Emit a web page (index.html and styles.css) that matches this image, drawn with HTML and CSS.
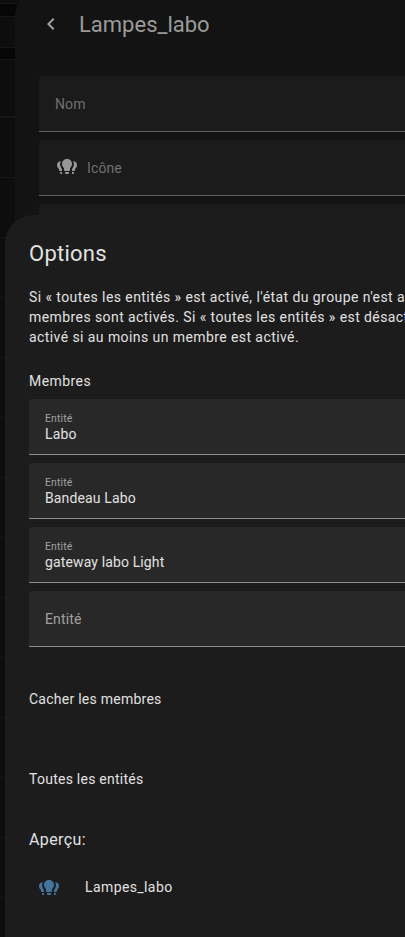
FILE: index.html
```html
<!DOCTYPE html>
<html lang="fr">
<head>
<meta charset="utf-8">
<title>Lampes_labo</title>
<link rel="stylesheet" href="styles.css">
</head>
<body>
<svg class="defs" aria-hidden="true">
  <symbol id="bulbs" viewBox="0 0 24 24">
    <path d="M12 4C9.2 4 7 6.1 7 8.8C7 10.6 7.8 12 9 13V15A1 1 0 0 0 10 16H14A1 1 0 0 0 15 15V13C16.2 12 17 10.6 17 8.8C17 6.1 14.8 4 12 4M10 17V18A1 1 0 0 0 11 19H13A1 1 0 0 0 14 18V17ZM6 6C3.5 6.2 2 8 2 10C2 11.8 2.8 13 4 14V15A1 1 0 0 0 5 16H7V14C5.9 12.8 5.1 11 5.1 9C5.1 8 5.4 7 6 6ZM18 6C20.5 6.2 22 8 22 10C22 11.8 21.2 13 20 14V15A1 1 0 0 1 19 16H17V14C18.1 12.8 18.9 11 18.9 9C18.9 8 18.6 7 18 6ZM5 17H7V19H6A1 1 0 0 1 5 18ZM17 17H19V18A1 1 0 0 1 18 19H17Z"/>
  </symbol>
</svg>
<div class="screen">
  <div class="table">
    <div class="row first"></div>
    <div class="row toolbar"></div>
    <div class="row search"></div>
    <div class="row toolbar short"></div>
    <div class="row heading"></div>
    <div class="row"></div><div class="row"></div><div class="row"></div><div class="row"></div>
    <div class="row"></div><div class="row"></div><div class="row"></div><div class="row"></div>
    <div class="row"></div><div class="row"></div><div class="row"></div><div class="row"></div>
    <div class="row"></div><div class="row"></div>
  </div>
  <section class="dialog">
    <header class="bar">
      <svg class="back" viewBox="0 0 24 24"><path d="M15.41 16.58L10.83 12L15.41 7.41L14 6L8 12L14 18Z"/></svg>
      <h1>Lampes_labo</h1>
    </header>
    <div class="field dim">Nom</div>
    <div class="field dim with-icon"><svg class="icon"><use href="#bulbs"/></svg>Icône</div>
    <div class="field dim"></div>
  </section>
  <section class="sheet">
    <h2>Options</h2>
    <p class="help">Si « toutes les entités » est activé, l'état du groupe n'est a<br>membres sont activés. Si « toutes les entités » est désact<br>activé si au moins un membre est activé.</p>
    <p class="label">Membres</p>
    <div class="field"><small>Entité</small><span>Labo</span></div>
    <div class="field"><small>Entité</small><span>Bandeau Labo</span></div>
    <div class="field"><small>Entité</small><span>gateway labo Light</span></div>
    <div class="field empty">Entité</div>
    <div class="toggle">Cacher les membres</div>
    <div class="toggle">Toutes les entités</div>
    <h3>Aperçu:</h3>
    <div class="preview"><svg class="icon"><use href="#bulbs"/></svg><span>Lampes_labo</span></div>
  </section>
</div>
</body>
</html>
```
FILE: styles.css
```css
* { box-sizing: border-box; }
body { margin: 0; background: #0d0d0d; font-family: Roboto, sans-serif; font-size: 14px; color: #e1e1e1; }
h1, h2, h3, p { margin: 0; font-weight: 400; }
.defs { position: absolute; width: 0; height: 0; }
.screen { position: relative; width: 405px; height: 937px; overflow: hidden; }
.row { height: 60px; border-bottom: 1px solid #171717; }
.row.first { height: 4px; }
.row.toolbar { height: 13px; background: #060606; }
.row.search { height: 31px; }
.row.toolbar.short { height: 12px; }
.row.heading { height: 58px; border-bottom: 2px solid #171717; }

.dialog { position: absolute; left: 15px; top: -12px; width: 560px; height: 960px; padding: 12px 24px; border-radius: 28px; background: #131313; }
.bar { display: flex; align-items: center; height: 48px; margin-bottom: 28px; }
.back { width: 24px; height: 24px; fill: #a0a0a0; }
.bar h1 { margin-left: 16px; padding-top: 2px; font-size: 22px; line-height: 28px; color: #9b9b9b; }

.field { display: flex; flex-direction: column; justify-content: center; height: 56px; margin-bottom: 8px; padding: 0 16px; border-radius: 4px 4px 0 0; border-bottom: 1px solid #8b8b8b; background: #282828; letter-spacing: 0.13px; }
.field small { padding-top: 1px; font-size: 10.5px; line-height: 14px; color: #a2a2a2; letter-spacing: 0.1px; }
.field span { line-height: 17px; }
.field.dim { background: #1b1b1b; border-color: #616161; color: #707070; }
.field.with-icon { flex-direction: row; justify-content: flex-start; align-items: center; gap: 8px; }
.field.empty { color: #a0a0a0; }
.icon { width: 24px; height: 24px; fill: currentColor; }
.with-icon .icon { color: #979797; margin-top: -1px; }

.sheet { position: absolute; left: 5px; top: 215px; width: 580px; height: 750px; padding: 24px; border-radius: 28px; background: #1c1c1c; }
.sheet h2 { padding-top: 1px; font-size: 22px; line-height: 28px; letter-spacing: 0.25px; }
.help { margin-top: 19px; line-height: 20px; letter-spacing: 0.42px; white-space: nowrap; }
.label { margin: 24px 0 8px; line-height: 20px; letter-spacing: 0.43px; }
.toggle { display: flex; align-items: center; height: 80px; letter-spacing: 0.25px; }
.field.empty + .toggle { margin-top: 12px; }
.sheet h3 { margin-top: 10px; font-size: 16px; line-height: 22px; letter-spacing: 0.4px; }
.preview { display: flex; align-items: center; gap: 24px; height: 40px; margin-top: 17px; padding-left: 8px; letter-spacing: 0.4px; }
.preview span { margin-top: -3px; }
.preview .icon { color: #44739e; }
```
